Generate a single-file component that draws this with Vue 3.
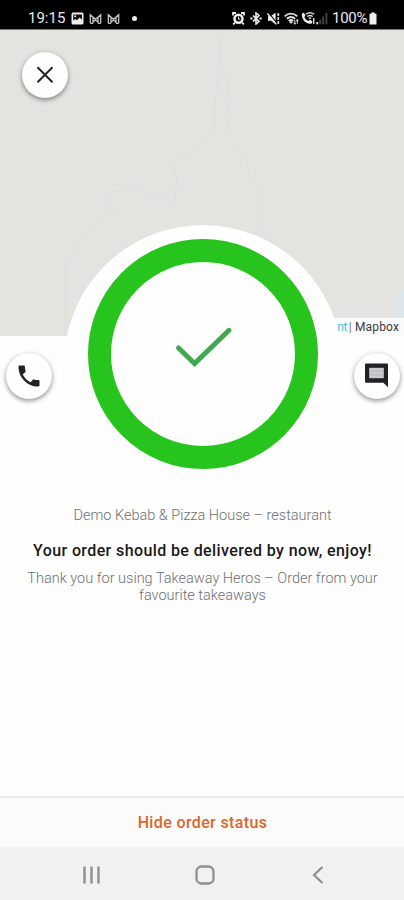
<script setup>
const headline = 'Your order should be delivered by now, enjoy!'
</script>

<template>
  <div class="screen">
    <header class="status-bar">
      <div class="status-left">
        <span class="clock">19:15</span>
        <svg class="s-photo" width="13" height="13" viewBox="0 0 13 13">
          <rect x="0.5" y="0.5" width="12" height="12" rx="1.5" fill="#eee" />
          <path d="M2.2 2.5h8.8v5.2L8.6 5.6 6 8.2 4.4 6.9 2.2 8.6z" fill="#111" />
          <circle cx="4.2" cy="4.3" r="1" fill="#eee" />
        </svg>
        <svg v-for="n in 2" :key="n" class="s-mail" width="13" height="12" viewBox="0 0 13 12">
          <path d="M1.3 10.3V1.7l5.2 4.6 5.2-4.6v8.6M4 10.3V4.4M9 10.3V4.4M1.3 10.3H4M9 10.3h2.7M4 9l2.5-2L9 9" fill="none" stroke="#c4c4c4" stroke-width="1.3" />
        </svg>
        <i class="dot"></i>
      </div>
      <div class="status-right">
        <svg width="13" height="13" viewBox="0 0 13 13">
          <path d="M1 3.5V1h3M9 1h3v2.5M3 10.7l-1.9 1.7M10 10.7l1.9 1.7" fill="none" stroke="#eee" stroke-width="1.8" />
          <circle cx="6.5" cy="6.8" r="4" fill="none" stroke="#eee" stroke-width="2.5" />
          <path d="M6.5 4.6v2.6h1.8" fill="none" stroke="#eee" stroke-width="1" />
        </svg>
        <svg class="s-bt" width="12" height="13" viewBox="0 0 12 13">
          <path d="M3 3.5l6 6L6 12V1l3 2.5-6 6" fill="none" stroke="#eee" stroke-width="1.6" />
          <path d="M.3 6.5h2.2M9.5 6.5h2.2" stroke="#eee" stroke-width="1.8" />
        </svg>
        <svg class="s-mute" width="13" height="13" viewBox="0 0 13 13">
          <path d="M1 4.2h2.5L8.6.8v11.4L4 8.8H1z" fill="#eee" />
          <path d="M1.2 .4l9 11" stroke="#000" stroke-width="1.2" />
          <path d="M.4 1.4l9 11" stroke="#eee" stroke-width="1.3" />
          <path d="M11.3 1v11" stroke="#ddd" stroke-width="1.7" stroke-dasharray="3 1" />
        </svg>
        <svg class="s-wifi" width="15" height="13" viewBox="0 0 15 13">
          <path d="M.7 4.3Q7-1 13.3 4.3M2.8 6.8Q7 3.2 11.2 6.8M4.8 9Q7 7 9.2 9" fill="none" stroke="#ddd" stroke-width="1.8" />
          <circle cx="7" cy="10.3" r="1.3" fill="#ddd" />
          <path d="M10.8 8v4.3M13.3 7.5v4.3M9.8 10.7l1 1.5 1-1.5M12.3 9l1-1.5 1 1.5" fill="none" stroke="#ddd" stroke-width="1" />
        </svg>
        <svg class="s-call" width="14" height="13" viewBox="0 0 14 13">
          <path d="M1 1.5l2-.8 1.5 3-1.2 1.2c1 2 2.2 3.2 4.2 4.1l1.4-1.3 2.5 1.6-.7 2.2C6 13.2-.2 7.6 1 1.5z" fill="#eee" />
          <path d="M4.8 2.3Q9-.8 13.2 2.3M6.3 4.5Q9 2.4 11.7 4.5M7.8 6.3q1.2-.7 2.4 0M12.7 6v6" fill="none" stroke="#ddd" stroke-width="1.4" />
        </svg>
        <svg class="s-signal" width="12" height="13" viewBox="0 0 12 13">
          <path d="M1.2 10v2.3" stroke="#ddd" stroke-width="1.9" />
          <path d="M4.2 7.5v4.8M7.2 4.5v7.8M10.4 1v11.3" stroke="#444" stroke-width="1.9" />
        </svg>
        <span class="percent">100%</span>
        <svg class="s-batt" width="8" height="13" viewBox="0 0 8 13">
          <path d="M2.2.5h3.6v1.3h1.7v10.7H.5V1.8h1.7z" fill="#eee" />
        </svg>
      </div>
    </header>

    <section class="map">
      <svg class="terrain" width="404" height="306" viewBox="0 30 404 306">
        <g fill="none" stroke="#d9dee1" stroke-width="1" opacity=".6">
          <path d="M220 34v27l-5 40v29l-10 13-17 9-15 11 4 17-2 22-10-3-28-9-28 2-4 9 12 9-19 10-16 21-7 12-10 12v69" />
          <path d="M222 61l6 20-2 21 5 38 13 14 6 22 8 12v50" stroke-width=".9" />
        </g>
        <path d="M404 289c-6 2-10 9-11 29v18h11z" fill="#dbe5ea" />
      </svg>
      <button class="fab close" aria-label="Close">
        <svg width="24" height="24" viewBox="0 0 24 24">
          <path d="M4.5 4.2l15 15M19.5 4.2l-15 15" fill="none" stroke="#242424" stroke-width="2" />
        </svg>
      </button>
      <div class="attribution"><span class="link">nt</span><span class="bar">|</span><span>Mapbox</span></div>
      <div class="halo"></div>
    </section>

    <main class="content">
      <div class="hero">
        <button class="fab" aria-label="Call">
          <svg width="28" height="28" viewBox="0 0 24 24">
            <path d="M6.62 10.79c1.44 2.83 3.76 5.14 6.59 6.59l2.2-2.2c.27-.27.67-.36 1.02-.24 1.12.37 2.33.57 3.57.57.55 0 1 .45 1 1V20c0 .55-.45 1-1 1-9.39 0-17-7.61-17-17 0-.55.45-1 1-1h3.5c.55 0 1 .45 1 1 0 1.25.2 2.45.57 3.57.11.35.03.74-.25 1.02z" fill="#222325" />
          </svg>
        </button>
        <div class="ring">
          <svg width="60" height="44" viewBox="0 0 60 44">
            <path d="M5.5 23l16.1 15.6L56 5.3" fill="none" stroke="#42a850" stroke-width="5" stroke-linecap="round" />
          </svg>
        </div>
        <button class="fab" aria-label="Chat">
          <svg width="28" height="28" viewBox="0 0 28 28">
            <path d="M3 1.5h21q1 0 1 1v22.8l-4.6-4.6H3q-1 0-1-1V2.5q0-1 1-1z" fill="#222226" />
            <path d="M6.2 5.8h14.6v10.4H6.2z" fill="#cccbd0" />
            <path d="M6.2 9h14.6M6.2 12.8h14.6" stroke="#b4b3b9" stroke-width="1" />
          </svg>
        </button>
      </div>

      <p class="restaurant">Demo Kebab &amp; Pizza House – restaurant</p>
      <h1>{{ headline }}</h1>
      <p class="thanks">Thank you for using Takeaway Heros – Order from your<br />favourite takeaways</p>
    </main>

    <button class="hide">Hide order status</button>

    <nav class="nav">
      <svg width="20" height="20" viewBox="0 0 20 20">
        <path d="M2.5 1.5v17M9.5 1.5v17M16.5 1.5v17" stroke="#929292" stroke-width="2.5" />
      </svg>
      <svg width="20" height="20" viewBox="0 0 20 20">
        <rect x="1.5" y="1.5" width="17" height="17" rx="5" fill="none" stroke="#8f8f8f" stroke-width="2.3" />
      </svg>
      <svg width="20" height="20" viewBox="0 0 20 20">
        <path d="M14.5 2L6 10l8.5 8" fill="none" stroke="#8f8f8f" stroke-width="2.2" />
      </svg>
    </nav>
  </div>
</template>

<style>
body { margin: 0; background: #fefefe; }
</style>

<style scoped>
.screen {
  width: 404px;
  height: 900px;
  display: flex;
  flex-direction: column;
  overflow: hidden;
  background: #fefefe;
  font-family: Roboto, "Liberation Sans", sans-serif;
}
button { border: 0; padding: 0; font-family: inherit; }
svg { display: block; flex: none; }
.status-bar {
  box-sizing: border-box;
  height: 30px;
  flex: none;
  display: flex;
  justify-content: space-between;
  padding: 8px 27px 0 28px;
  background: #000;
  border-bottom: 1px solid #777;
  color: #e9e9e9;
}
.status-left, .status-right { display: flex; align-items: center; height: 21px; }
.clock, .percent { font-size: 15px; line-height: 23px; }
.clock { width: 38px; margin-right: 5px; }
.s-mail { margin-left: 5px; }
.dot { width: 5px; height: 5px; border-radius: 50%; background: #eee; margin-left: 12px; }
.s-bt { margin-left: 5px; }
.s-mute { margin-left: 5px; }
.s-wifi { margin-left: 4px; }
.s-call { margin-left: 2px; }
.s-signal { margin-left: 1px; }
.percent { margin-left: 4px; width: 36px; letter-spacing: -0.3px; }
.s-batt { margin-left: 1px; }

.map { position: relative; flex: none; height: 306px; background: #e4e3df; }
.fab {
  width: 46px;
  height: 46px;
  flex: none;
  display: flex;
  align-items: center;
  justify-content: center;
  border-radius: 50%;
  background: #fefefe;
  box-shadow: 0 2px 4px rgba(0, 0, 0, 0.36), 0 1px 7px rgba(0, 0, 0, 0.1);
}
.close { position: absolute; left: 22px; top: 22px; }
.attribution {
  position: absolute;
  right: 0;
  bottom: 0;
  box-sizing: border-box;
  width: 76px;
  height: 18px;
  padding-right: 5px;
  display: flex;
  justify-content: flex-end;
  background: #fafafa;
  color: #3c3c3c;
  font-size: 12px;
  line-height: 18px;
  letter-spacing: 0.15px;
}
.link { color: #55b9d3; letter-spacing: -0.5px; margin-right: 2px; }
.bar { color: #777; margin-right: 3px; }
.halo {
  position: absolute;
  left: 64px;
  top: 195px;
  width: 278px;
  height: 278px;
  border-radius: 50%;
  background: #fefefe;
  clip-path: inset(0 4px 0 0);
}

.content { position: relative; flex: 1; text-align: center; }
.hero {
  display: flex;
  justify-content: space-between;
  align-items: flex-start;
  padding: 17px 4px 0 6px;
  height: 148px;
}
.ring {
  box-sizing: border-box;
  width: 230px;
  height: 230px;
  margin-top: -114px;
  padding-bottom: 14px;
  border: 23px solid #28c41e;
  border-radius: 50%;
  display: flex;
  align-items: center;
  justify-content: center;
  background: #fefefe;
}
p, h1 { margin: 0; padding-left: 1px; white-space: nowrap; }
.restaurant, .thanks { color: #707070; font-size: 14.5px; font-weight: 300; }
.restaurant { margin-top: 6px; line-height: 18px; }
h1 { margin-top: 16px; font-size: 16px; font-weight: 500; line-height: 20px; letter-spacing: 0.39px; color: #191919; }
.thanks { margin-top: 9px; line-height: 17px; }

.hide {
  box-sizing: border-box;
  height: 51px;
  flex: none;
  border-top: 2px solid #ebebeb;
  background: #fbfbfa;
  color: #dc662b;
  font-size: 16px;
  font-weight: 500;
  letter-spacing: 0.37px;
  padding-left: 1px;
}
.nav {
  height: 53px;
  flex: none;
  display: flex;
  justify-content: space-between;
  align-items: center;
  box-sizing: border-box;
  padding: 3px 76px 0 82px;
  background: #f1f1f1;
}
</style>
